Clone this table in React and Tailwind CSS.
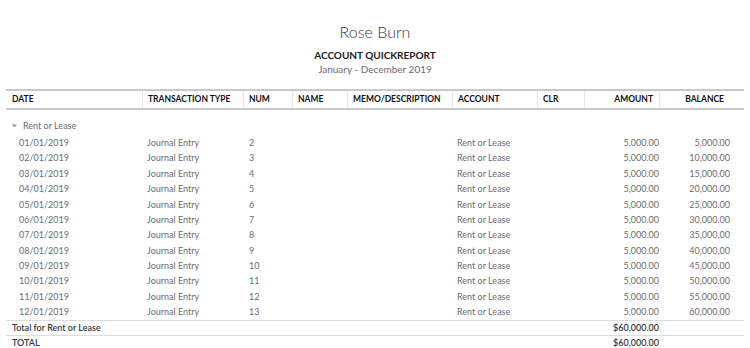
const COLS = 'grid grid-cols-[136px_101px_49px_55px_105px_85px_47px_75px_84px]';

const HEADERS = [
  { label: 'DATE', cls: 'pl-[6px]' },
  { label: 'TRANSACTION TYPE', cls: 'pl-[5px] border-l border-[#e6e6e6]' },
  { label: 'NUM', cls: 'pl-[5px] border-l border-[#e6e6e6]' },
  { label: 'NAME', cls: 'pl-[5px] border-l border-[#e6e6e6]' },
  { label: 'MEMO/DESCRIPTION', cls: 'pl-[5px] border-l border-[#e6e6e6]' },
  { label: 'ACCOUNT', cls: 'pl-[5px] border-l border-[#e6e6e6]' },
  { label: 'CLR', cls: 'pl-[5px] border-l border-[#e6e6e6]' },
  { label: 'AMOUNT', cls: 'justify-end pr-[6px] border-l border-[#e6e6e6]' },
  { label: 'BALANCE', cls: 'justify-end pr-[19px] border-l border-[#e6e6e6]' },
];

const fmt = n => n.toLocaleString('en-US', { minimumFractionDigits: 2, maximumFractionDigits: 2 });

const ROWS = Array.from({ length: 12 }, (_, i) => ({
  date: `${String(i + 1).padStart(2, '0')}/01/2019`,
  type: 'Journal Entry',
  num: String(i + 2),
  account: 'Rent or Lease',
  amount: 5000,
  balance: 5000 * (i + 1),
}));

export default function App() {
  return (
    <div className="w-[750px] h-[348px] overflow-hidden bg-white font-['Lato',sans-serif] text-[#393a3d]">
      <div className="pt-[22px] flex flex-col items-center">
        <h1 className="text-[16px] leading-[20px] font-light">Rose Burn</h1>
        <p className="mt-[7px] text-[10px] leading-[13px] font-bold text-[#212121]">ACCOUNT QUICKREPORT</p>
        <p className="mt-[1px] text-[10px] leading-[13px] text-[#6b6c72]">January - December 2019</p>
      </div>

      <div className="mx-[6px] mt-[13px]">
        <div className={`${COLS} border-t-2 border-b-2 border-[#c8c8c8] h-[21px] text-[8.5px] font-bold text-[#111]`}>
          {HEADERS.map(h => (
            <div key={h.label} className={`flex items-center ${h.cls}`}>{h.label}</div>
          ))}
        </div>

        <div className="pt-[6px]">
          <div className="h-[19px] flex items-center pl-[5px] text-[9px] text-[#6b6c72]">
            <svg width="7" height="7" viewBox="0 0 7 7" className="mr-[5px]">
              <path d="M1 2.5 L6 2.5 L3.5 5.2 Z" fill="#8d9096" />
            </svg>
            Rent or Lease
          </div>

          {ROWS.map(r => (
            <div key={r.date} className={`${COLS} h-[15.4px] items-center text-[9px] text-[#6b6c72]`}>
              <div className="pl-[13px]">{r.date}</div>
              <div className="pl-[5px]">{r.type}</div>
              <div className="pl-[6px]">{r.num}</div>
              <div />
              <div />
              <div className="pl-[5px]">{r.account}</div>
              <div />
              <div className="text-right">{fmt(r.amount)}</div>
              <div className="text-right pr-[13px]">{fmt(r.balance)}</div>
            </div>
          ))}

          <div className={`${COLS} h-[15px] items-center border-t border-[#dcdcdc] text-[9px] leading-[11px] font-semibold text-[#393a3d]`}>
            <div className="col-span-7 pl-[6px]">Total for Rent or Lease</div>
            <div className="text-right">$60,000.00</div>
            <div />
          </div>
          <div className={`${COLS} h-[14px] items-center border-t border-[#dcdcdc] text-[9px] leading-[11px] font-semibold text-[#393a3d]`}>
            <div className="col-span-7 pl-[6px]">TOTAL</div>
            <div className="text-right">$60,000.00</div>
            <div />
          </div>
        </div>
      </div>
    </div>
  );
}
